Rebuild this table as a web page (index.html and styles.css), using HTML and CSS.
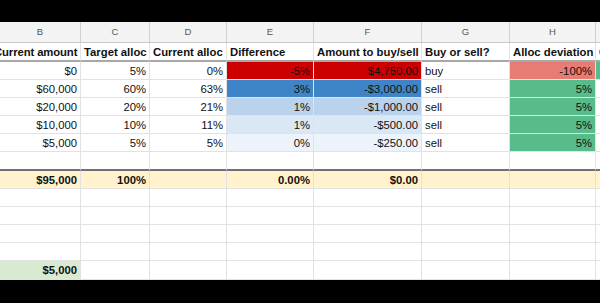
FILE: index.html
```html
<!DOCTYPE html>
<html>
<head>
<meta charset="utf-8">
<link rel="stylesheet" href="styles.css">
</head>
<body>
<div class="screen">
  <div class="sheet">
    <div class="c hd first">B</div><div class="c hd">C</div><div class="c hd">D</div><div class="c hd">E</div><div class="c hd">F</div><div class="c hd">G</div><div class="c hd">H</div><div class="c hd">I</div>

    <div class="c nm first">Current amount</div><div class="c nm">Target alloc</div><div class="c nm">Current alloc</div><div class="c nm">Difference</div><div class="c nm">Amount to buy/sell</div><div class="c nm">Buy or sell?</div><div class="c nm">Alloc deviation</div><div class="c nm">Current</div>

    <div class="c r">$0</div><div class="c r">5%</div><div class="c r">0%</div><div class="c r red">-5%</div><div class="c r red">$4,750.00</div><div class="c">buy</div><div class="c r salmon">-100%</div><div class="c green"></div>

    <div class="c r">$60,000</div><div class="c r">60%</div><div class="c r">63%</div><div class="c r blue1">3%</div><div class="c r blue1">-$3,000.00</div><div class="c">sell</div><div class="c r green">5%</div><div class="c"></div>

    <div class="c r">$20,000</div><div class="c r">20%</div><div class="c r">21%</div><div class="c r blue2">1%</div><div class="c r blue2">-$1,000.00</div><div class="c">sell</div><div class="c r green">5%</div><div class="c"></div>

    <div class="c r">$10,000</div><div class="c r">10%</div><div class="c r">11%</div><div class="c r blue3">1%</div><div class="c r blue3">-$500.00</div><div class="c">sell</div><div class="c r green">5%</div><div class="c"></div>

    <div class="c r">$5,000</div><div class="c r">5%</div><div class="c r">5%</div><div class="c r blue4">0%</div><div class="c r blue4">-$250.00</div><div class="c">sell</div><div class="c r green">5%</div><div class="c"></div>

    <div class="c sep"></div><div class="c sep"></div><div class="c sep"></div><div class="c sep"></div><div class="c sep"></div><div class="c sep"></div><div class="c sep"></div><div class="c sep"></div>

    <div class="c r tot">$95,000</div><div class="c r tot">100%</div><div class="c r tot"></div><div class="c r tot">0.00%</div><div class="c r tot">$0.00</div><div class="c tot"></div><div class="c tot"></div><div class="c tot"></div>

    <div class="c"></div><div class="c"></div><div class="c"></div><div class="c"></div><div class="c"></div><div class="c"></div><div class="c"></div><div class="c"></div>
    <div class="c"></div><div class="c"></div><div class="c"></div><div class="c"></div><div class="c"></div><div class="c"></div><div class="c"></div><div class="c"></div>
    <div class="c"></div><div class="c"></div><div class="c"></div><div class="c"></div><div class="c"></div><div class="c"></div><div class="c"></div><div class="c"></div>
    <div class="c"></div><div class="c"></div><div class="c"></div><div class="c"></div><div class="c"></div><div class="c"></div><div class="c"></div><div class="c"></div>

    <div class="c r cash">$5,000</div><div class="c"></div><div class="c"></div><div class="c"></div><div class="c"></div><div class="c"></div><div class="c"></div><div class="c"></div>
  </div>
</div>
</body>
</html>
```

FILE: styles.css
```css
html, body {
  margin: 0;
  padding: 0;
  background: #000;
  overflow: hidden;
}

.screen {
  width: 600px;
  height: 303px;
  padding-top: 22px;
  box-sizing: border-box;
  overflow: hidden;
}

.sheet {
  display: grid;
  grid-template-columns: 87px 69px 77px 87px 108px 88px 86px 30px;
  grid-template-rows: 21px 19px repeat(5, 18px) 19px 18px repeat(4, 18px) 19px;
  margin-left: -6px;
  width: 632px;
  background: #fff;
  font-family: "Liberation Sans", Arial, sans-serif;
  font-size: 11.3px;
  color: #111;
}

.c {
  box-sizing: border-box;
  border-right: 1px solid #e2e2e2;
  border-bottom: 1px solid #e2e2e2;
  padding: 0 3px;
  line-height: 18px;
  white-space: nowrap;
  overflow: hidden;
}

.r { text-align: right; }

.hd {
  line-height: 20px;
  background: #f3f3f3;
  border-right-color: #d0d0d0;
  border-bottom-color: #c8c8c8;
  text-align: center;
  font-size: 9.5px;
  color: #555;
}

.hd.first { text-indent: 6px; }

.nm {
  font-weight: bold;
  line-height: 19px;
  border-bottom: 2px solid #a8a8a8;
  color: #111;
}

.nm.first {
  padding-left: 0;
  padding-right: 0;
  letter-spacing: -0.1px;
}

.sep {
  border-bottom: 2px solid #707070;
}

.tot {
  background: #fff2cc;
  font-weight: bold;
}

.cash {
  background: #d9ead3;
  font-weight: bold;
}

.red { background: #cc0000; }
.blue1 { background: #3d85c6; }
.blue2 { background: #bad2eb; }
.blue3 { background: #dae7f5; }
.blue4 { background: #edf3fb; }
.salmon { background: #e67c73; }
.green { background: #57bb8a; }
```
